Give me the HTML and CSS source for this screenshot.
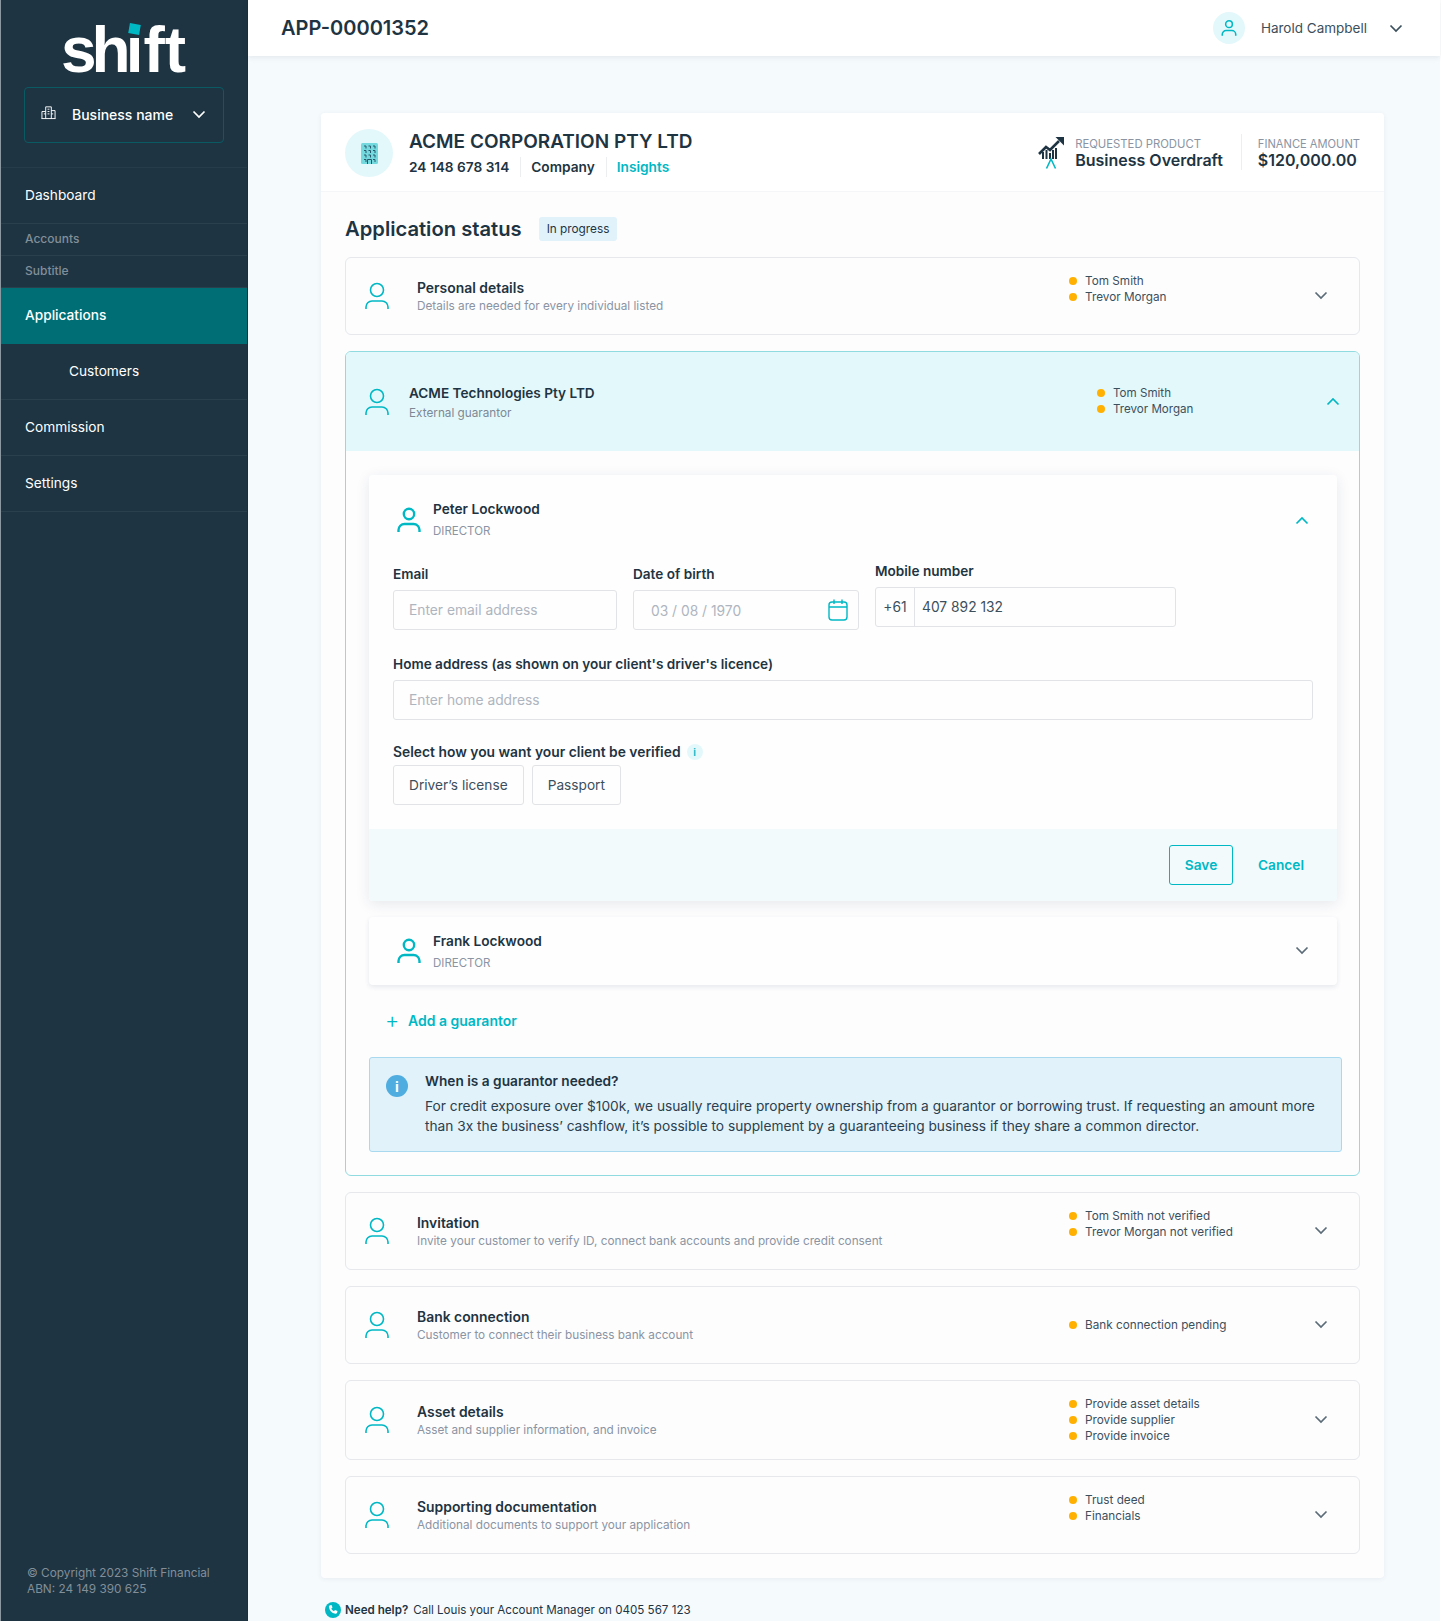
FILE: index.html
```html
<!DOCTYPE html>
<html lang="en">
<head>
<meta charset="utf-8">
<title>APP-00001352</title>
<link rel="stylesheet" href="styles.css">
</head>
<body>
<svg class="defs" width="0" height="0" aria-hidden="true">
  <symbol id="person" viewBox="0 0 24 28"><circle cx="12" cy="8" r="6.5" fill="none" stroke="currentColor" stroke-width="1.6"/><path d="M1 27v-2a6 6 0 0 1 6-6h10a6 6 0 0 1 6 6v2" fill="none" stroke="currentColor" stroke-width="1.6"/></symbol>
  <symbol id="person-b" viewBox="0 0 24 28"><circle cx="12" cy="8" r="5.2" fill="none" stroke="currentColor" stroke-width="2.4"/><path d="M1.5 26v-2a6 6 0 0 1 6-6h9a6 6 0 0 1 6 6v2" fill="none" stroke="currentColor" stroke-width="2.4"/></symbol>
  <symbol id="down" viewBox="0 0 14 9"><path d="M1.500 1.500 7 7l5.500-5.500" fill="none" stroke="currentColor" stroke-width="1.700"/></symbol>
  <symbol id="up" viewBox="0 0 14 9"><path d="M1.500 7.500 7 2l5.500 5.500" fill="none" stroke="currentColor" stroke-width="1.700"/></symbol>
</svg>
<div class="app">
  <aside class="sidebar">
    <div class="brand">
      <div class="logo"><span class="logo-tight">sh</span>ift<span class="logo-dot"></span></div>
      <div class="biz">
        <svg class="biz-icon" viewBox="0 0 16 16"><path d="M1 15V7.500h4M5 15V2.500h6V15M11 6.500h4V15M.5 15h15M7 5h2M7 7.500h2M7 10h2M3 10h2M11 10h2" fill="none" stroke="#fff" stroke-width="1"/></svg>
        <span class="biz-name">Business name</span>
        <svg class="biz-chev"><use href="#down"/></svg>
      </div>
    </div>
    <nav class="nav">
      <a class="nav-item">Dashboard</a>
      <span class="nav-sub">Accounts</span>
      <span class="nav-sub">Subtitle</span>
      <a class="nav-item active">Applications</a>
      <a class="nav-item indent">Customers</a>
      <a class="nav-item">Commission</a>
      <a class="nav-item">Settings</a>
    </nav>
    <footer class="side-foot">© Copyright 2023 Shift Financial<br>ABN: 24 149 390 625</footer>
  </aside>
  <div class="main">
    <header class="topbar">
      <div class="app-id">APP-00001352</div>
      <div class="user">
        <span class="user-avatar"><svg class="user-icon"><use href="#person-b"/></svg></span>
        <span class="user-name">Harold Campbell</span>
        <svg class="user-chev"><use href="#down"/></svg>
      </div>
    </header>
    <div class="content">
      <section class="card">
        <div class="card-head">
          <span class="co-avatar">
            <svg class="co-icon" viewBox="0 0 17 21"><rect width="17" height="21" rx="1.500" fill="#74d8df"/><path d="M3 3h2v2.500M7.500 3h2v2.500M12 3h2v2.500M3 7.500h2V10M7.500 7.500h2V10M12 7.500h2V10M3 12h2v2.500M7.500 12h2v2.500M12 12h2v2.500M3 16.500h2V19M12 16.500h2V19M6.500 21v-4.500h4V21" fill="none" stroke="#28586a" stroke-width="1"/></svg>
          </span>
          <div class="co-info">
            <div class="co-name">ACME CORPORATION PTY LTD</div>
            <div class="co-meta"><span>24 148 678 314</span><span>Company</span><span class="link">Insights</span></div>
          </div>
          <svg class="prod-icon" viewBox="0 0 26 32"><path d="M1 17 8 10l4 3 9-9" fill="none" stroke="#1e3442" stroke-width="2.600"/><path d="M17.500 0H26v8.500z" fill="#1e3442"/><path d="M5 15v7M8.500 13v9M12 16v6M15 13v9M18 11v11" stroke="#1e3442" stroke-width="2"/><path d="M8.500 31.500 13 22l4.500 9.500" fill="none" stroke="#00b8c4" stroke-width="1.600"/></svg>
          <div class="prod">
            <div class="prod-label">REQUESTED PRODUCT</div>
            <div class="prod-value">Business Overdraft</div>
          </div>
          <div class="prod amount">
            <div class="prod-label">FINANCE AMOUNT</div>
            <div class="prod-value">$120,000.00</div>
          </div>
        </div>
        <div class="card-body">
          <div class="status-head">
            <h2 class="status-title">Application status</h2>
            <span class="chip">In progress</span>
          </div>

          <div class="row">
            <svg class="person"><use href="#person"/></svg>
            <div class="row-text"><div class="row-title">Personal details</div><div class="row-sub">Details are needed for every individual listed</div></div>
            <ul class="todo two"><li>Tom Smith</li><li>Trevor Morgan</li></ul>
            <svg class="chev"><use href="#down"/></svg>
          </div>

          <div class="panel">
            <div class="panel-head">
              <svg class="person"><use href="#person"/></svg>
              <div class="panel-text"><div class="row-title">ACME Technologies Pty LTD</div><div class="panel-sub">External guarantor</div></div>
              <ul class="todo"><li>Tom Smith</li><li>Trevor Morgan</li></ul>
              <svg class="chev up"><use href="#up"/></svg>
            </div>
            <div class="panel-body">
              <div class="guar open">
                <div class="guar-head">
                  <svg class="person-b"><use href="#person-b"/></svg>
                  <div class="guar-text"><div class="guar-name">Peter Lockwood</div><div class="guar-role">DIRECTOR</div></div>
                  <svg class="chev up"><use href="#up"/></svg>
                </div>
                <div class="form">
                  <div class="form-row">
                    <div class="field f-email"><label class="label">Email</label><div class="input ph">Enter email address</div></div>
                    <div class="field f-dob"><label class="label">Date of birth</label><div class="input ph date">03 / 08 / 1970<svg class="cal" viewBox="0 0 20 22"><rect x="1" y="3" width="18" height="18" rx="3" fill="none" stroke="#00b8c4" stroke-width="1.400"/><path d="M1 8h18M6 .5V5M14 .5V5" fill="none" stroke="#00b8c4" stroke-width="1.400"/></svg></div></div>
                    <div class="field f-mob"><label class="label">Mobile number</label><div class="input phone"><span class="prefix">+61</span><span class="num">407 892 132</span></div></div>
                  </div>
                  <div class="field f-home"><label class="label">Home address (as shown on your client's driver's licence)</label><div class="input ph">Enter home address</div></div>
                  <div class="verify">
                    <div class="label verify-label">Select how you want your client be verified <span class="i-badge">i</span></div>
                    <div class="opts"><span class="opt">Driver’s license</span><span class="opt">Passport</span></div>
                  </div>
                </div>
                <div class="guar-foot"><span class="btn-save">Save</span><span class="btn-cancel">Cancel</span></div>
              </div>
              <div class="guar closed">
                <div class="guar-head">
                  <svg class="person-b"><use href="#person-b"/></svg>
                  <div class="guar-text"><div class="guar-name">Frank Lockwood</div><div class="guar-role">DIRECTOR</div></div>
                  <svg class="chev"><use href="#down"/></svg>
                </div>
              </div>
              <div class="add"><span class="plus">+</span>Add a guarantor</div>
              <div class="info">
                <span class="info-icon">i</span>
                <div class="info-text">
                  <div class="info-title">When is a guarantor needed?</div>
                  <p class="info-body">For credit exposure over $100k, we usually require property ownership from a guarantor or borrowing trust. If requesting an amount more than 3x the business’ cashflow, it’s possible to supplement by a guaranteeing business if they share a common director.</p>
                </div>
              </div>
            </div>
          </div>

          <div class="row">
            <svg class="person"><use href="#person"/></svg>
            <div class="row-text"><div class="row-title">Invitation</div><div class="row-sub">Invite your customer to verify ID, connect bank accounts and provide credit consent</div></div>
            <ul class="todo two"><li>Tom Smith not verified</li><li>Trevor Morgan not verified</li></ul>
            <svg class="chev"><use href="#down"/></svg>
          </div>
          <div class="row">
            <svg class="person"><use href="#person"/></svg>
            <div class="row-text"><div class="row-title">Bank connection</div><div class="row-sub">Customer to connect their business bank account</div></div>
            <ul class="todo"><li>Bank connection pending</li></ul>
            <svg class="chev"><use href="#down"/></svg>
          </div>
          <div class="row tall">
            <svg class="person"><use href="#person"/></svg>
            <div class="row-text"><div class="row-title">Asset details</div><div class="row-sub">Asset and supplier information, and invoice</div></div>
            <ul class="todo"><li>Provide asset details</li><li>Provide supplier</li><li>Provide invoice</li></ul>
            <svg class="chev"><use href="#down"/></svg>
          </div>
          <div class="row">
            <svg class="person"><use href="#person"/></svg>
            <div class="row-text"><div class="row-title">Supporting documentation</div><div class="row-sub">Additional documents to support your application</div></div>
            <ul class="todo two"><li>Trust deed</li><li>Financials</li></ul>
            <svg class="chev"><use href="#down"/></svg>
          </div>
        </div>
      </section>
      <div class="help">
        <svg class="help-icon" viewBox="0 0 16 16"><circle cx="8" cy="8" r="8" fill="#00b8c4"/><path d="M4.500 3.500 6.500 3l1 2.500-1.200 1c.5 1.300 1.300 2.100 2.700 2.700l1-1.200 2.500 1-.5 2c-.3.600-1 .9-1.600.8C6.800 11.200 4.800 9 3.900 5c-.1-.6.100-1.200.6-1.500z" fill="#fff"/></svg>
        <b class="help-strong">Need help?</b><span>Call Louis your Account Manager on 0405 567 123</span>
      </div>
    </div>
  </div>
</div>
</body>
</html>
```
FILE: styles.css
```css
* { box-sizing: border-box; }
html, body { margin: 0; padding: 0; }
body {
  background: #fff;
  font-family: Inter, "Noto Sans", sans-serif;
  color: #1e3442;
  font-size: 13px;
  height: 1621px;
  overflow: hidden;
}
.defs { position: absolute; }
.app {
  display: flex;
  width: 1440px;
  height: 1621px;
  border-left: 1px solid #8b98a1;
  background: #f5fafd;
}

/* sidebar */
.sidebar {
  width: 247px;
  flex: none;
  background: #1e3442;
  color: #fff;
  display: flex;
  flex-direction: column;
  border-right: 1px solid #18303c;
}
.brand { height: 167px; padding: 0 23px; display: flex; flex-direction: column; }
.logo {
  position: relative;
  align-self: center;
  font-family: "Liberation Sans", sans-serif;
  font-weight: 700;
  font-size: 64px;
  line-height: 66px;
  height: 66px;
  margin: 17px 1px 4px 0;
}
.logo-tight { letter-spacing: -5px; }
.logo-dot {
  position: absolute;
  left: 68px;
  top: 7px;
  width: 11px;
  height: 10px;
  background: #00b8c4;
  transform: rotate(10deg);
}
.biz {
  height: 56px;
  border: 1px solid #0a5a63;
  border-radius: 4px;
  display: flex;
  align-items: center;
  padding: 0 17px 2px 16px;
}
.biz-icon { width: 15px; height: 16px; margin-bottom: 4px; }
.biz-name { font-weight: 500; font-size: 14px; margin-left: 16px; flex: 1; }
.biz-chev { width: 14px; height: 9px; color: #fff; }
.nav { display: flex; flex-direction: column; border-top: 1px solid #263c4a; }
.nav-item {
  height: 56px;
  padding: 0 0 1px 24px;
  display: flex;
  align-items: center;
  font-size: 13.700px;
  border-bottom: 1px solid #2a404d;
}
.nav-item.active { background: #006e75; font-weight: 500; border-bottom: 0; padding-bottom: 2px; }
.nav-item.indent { padding-left: 68px; }
.nav-sub {
  height: 32px;
  padding: 0 0 2px 24px;
  display: flex;
  align-items: center;
  font-size: 12px;
  font-weight: 500;
  color: #828f99;
  border-bottom: 1px solid #2a404d;
}
.side-foot {
  margin-top: auto;
  padding: 0 0 24px 26px;
  font-size: 11.800px;
  line-height: 16px;
  color: #828f99;
}

/* main */
.main { flex: 1; min-width: 0; }
.topbar {
  height: 56px;
  background: #fff;
  box-shadow: 0 1px 6px rgba(30, 52, 66, 0.1);
  display: flex;
  align-items: center;
  justify-content: space-between;
  padding: 0 37px 0 33px;
}
.app-id { font-size: 20px; font-weight: 600; }
.user { display: flex; align-items: center; }
.user-avatar {
  width: 32px; height: 32px; border-radius: 50%;
  background: #e3f8fb; color: #00b8c4;
  display: flex; align-items: center; justify-content: center;
}
.user-icon { width: 16px; height: 18px; }
.user-name { margin-left: 16px; font-size: 13.500px; color: #3c4f5c; }
.user-chev { width: 14px; height: 9px; margin-left: 22px; color: #3c4f5c; }
.content { padding: 57px 56px 0 73px; }
.card {
  background: #fdfdfe;
  border-radius: 4px;
  box-shadow: 0 1px 5px rgba(30, 52, 66, 0.07);
  height: 1465px;
}
.card-head {
  height: 79px;
  background: #fff;
  border-bottom: 1px solid #f5f6f8;
  border-radius: 4px 4px 0 0;
  display: flex;
  align-items: center;
  padding: 0 24px;
}
.co-avatar {
  width: 48px; height: 48px; border-radius: 50%;
  background: #e3f8fb;
  display: flex; align-items: center; justify-content: center;
  flex: none;
  margin-top: 2px;
}
.co-icon { width: 17px; height: 21px; }
.co-info { margin-left: 16px; flex: 1; padding-top: 2px; }
.co-name { font-size: 19px; font-weight: 600; line-height: 24px; }
.co-meta { display: flex; margin-top: 3px; font-size: 13.700px; font-weight: 600; line-height: 20px; }
.co-meta span + span { border-left: 1px solid #eceef0; margin-left: 11px; padding-left: 10px; }
.link { color: #00b8c4; }
.prod-icon { width: 26px; height: 32px; margin-right: 11px; margin-top: 2px; }
.prod { padding-top: 3px; }
.prod-label { font-size: 11.300px; color: #8a94a3; line-height: 14px; }
.prod-value { font-size: 16px; font-weight: 600; line-height: 20px; margin-top: -1px; }
.amount { border-left: 1px solid #eceef0; margin-left: 18px; padding-left: 16px; }
.amount .prod-label { font-size: 11.150px; }

.card-body { padding: 0 24px; }
.status-head { height: 65px; display: flex; align-items: center; padding-top: 9px; }
.status-title { margin: 0; font-size: 20.200px; font-weight: 600; line-height: 24px; }
.chip {
  margin-left: 17px;
  height: 24px;
  line-height: 24px;
  padding: 0 8px;
  background: #e1f2fb;
  border-radius: 3px;
  font-size: 11.800px;
}
.row {
  height: 78px;
  margin-bottom: 16px;
  border: 1px solid #e6e8eb;
  border-radius: 6px;
  display: flex;
  align-items: center;
  padding: 0 20px 0 19px;
  background: #fdfdfe;
}
.row.tall { height: 80px; }
.person { width: 24px; height: 28px; color: #00b8c4; flex: none; }
.row-text { margin-left: 28px; flex: 1; }
.row-title { font-size: 13.900px; font-weight: 600; line-height: 20px; }
.panel-text .row-title { font-size: 13.600px; }
.row-sub { font-size: 11.750px; color: #8a94a3; line-height: 16px; }
.todo { list-style: none; margin: 0; padding: 0; width: 245px; font-size: 11.750px; line-height: 16px; color: #3c4f5c; }
.todo.two { margin-bottom: 14px; }
.todo li { position: relative; padding-left: 16px; }
.todo li::before {
  content: "";
  position: absolute;
  left: 0; top: 4px;
  width: 8px; height: 8px;
  border-radius: 50%;
  background: #ffb000;
}
.chev { width: 14px; height: 9px; color: #5b6b77; flex: none; margin: 0 11px 2px 0; }
.chev.up { color: #00b8c4; margin-bottom: 0; }

.panel {
  height: 825px;
  margin-bottom: 16px;
  border: 1px solid #8fdbdf;
  border-radius: 6px;
  overflow: hidden;
}
.panel-head {
  height: 99px;
  background: #e3f8fb;
  display: flex;
  align-items: center;
  padding: 0 8px 0 19px;
}
.panel-text { margin-left: 20px; flex: 1; }
.panel-sub { font-size: 11.750px; color: #7c8894; line-height: 16px; margin-top: 2px; }
.panel-head .todo { width: 229px; margin-bottom: 2px; font-size: 11.600px; }
.panel-body { padding: 24px 18px 0 23px; }
.guar { background: #fefefe; border-radius: 4px; width: 968px; box-shadow: 0 3px 14px rgba(30, 52, 66, 0.1); }
.guar.closed { height: 68px; margin-top: 16px; box-shadow: 0 2px 5px rgba(30, 52, 66, 0.1); }
.guar.open { height: 426px; display: flex; flex-direction: column; overflow: hidden; }
.guar-head { display: flex; align-items: center; height: 68px; padding: 0 28px 0 28px; }
.guar.open .guar-head { height: 90px; }
.guar.open .guar-text { margin-top: -2px; }
.person-b { width: 24px; height: 28px; color: #00b8c4; flex: none; }
.guar-text { margin-left: 12px; flex: 1; }
.guar-name { font-size: 13.700px; font-weight: 600; line-height: 18px; }
.guar-role { font-size: 11.500px; color: #8a94a3; line-height: 16px; margin-top: 5px; }
.guar-head .chev { margin-right: 0; }
.form { padding: 0 24px; flex: 1; }
.form-row { display: flex; gap: 16px; margin-top: -1px; }
.field { display: flex; flex-direction: column; }
.label { font-size: 13.600px; font-weight: 600; line-height: 20px; margin-bottom: 6px; }
.f-email { width: 224px; }
.f-dob { width: 226px; }
.f-mob { width: 301px; margin-top: -3px; }
.f-home { margin-top: 24px; }
.input {
  height: 40px;
  border: 1px solid #e1e3e6;
  border-radius: 3px;
  display: flex;
  align-items: center;
  padding: 0 15px;
  font-size: 13.800px;
}
.ph { color: #aeb5bf; }
.date { justify-content: space-between; padding: 1px 10px 0 17px; }
.cal { width: 20px; height: 22px; margin-top: -2px; }
.phone { padding: 0; color: #3c4f5c; }
.prefix { width: 39px; height: 100%; border-right: 1px solid #e1e3e6; display: flex; align-items: center; justify-content: center; }
.num { margin-left: 7px; }
.verify { margin-top: 22px; }
.verify-label { font-size: 13.850px; margin-bottom: 3px; display: flex; align-items: center; gap: 6px; }
.i-badge {
  width: 16px; height: 16px; border-radius: 50%;
  background: #e3f8fb; color: #00b8c4;
  font-size: 10px; display: flex; align-items: center; justify-content: center;
}
.opts { display: flex; gap: 8px; }
.opt {
  height: 40px; display: flex; align-items: center;
  padding: 0 15px;
  border: 1px solid #e1e3e6; border-radius: 3px;
  font-size: 13.700px; color: #3c4f5c;
}
.guar-foot {
  height: 72px;
  background: #f3fafc;
  flex: none;
  display: flex;
  align-items: center;
  justify-content: flex-end;
  padding-right: 33px;
}
.btn-save {
  width: 64px; height: 40px;
  border: 1px solid #00b8c4; border-radius: 3px;
  color: #00b8c4; font-weight: 600; font-size: 13.700px;
  display: flex; align-items: center; justify-content: center;
}
.btn-cancel { margin-left: 25px; color: #00b8c4; font-weight: 600; font-size: 13.700px; }
.add {
  margin-top: 25px;
  height: 20px;
  display: flex;
  align-items: center;
  color: #00b8c4;
  font-size: 14px;
  font-weight: 600;
  padding-left: 16px;
}
.plus { font-size: 22px; font-weight: 300; width: 23px; }
.info {
  margin-top: 27px;
  width: 973px;
  height: 95px;
  background: #e1f2fb;
  border: 1px solid #a9d9ef;
  border-radius: 3px;
  display: flex;
  padding: 13px 24px 0 16px;
}
.info-icon {
  width: 22px; height: 22px; border-radius: 50%;
  background: #4fade0; color: #fff;
  font-weight: 700; font-size: 14px;
  display: flex; align-items: center; justify-content: center;
  flex: none;
  margin-top: 4px;
}
.info-text { margin-left: 17px; }
.info-title { font-size: 13.700px; font-weight: 600; line-height: 20px; }
.info-body { margin: 5px 0 0; font-size: 13.720px; line-height: 20px; color: #2b404e; }

.help { display: flex; align-items: center; margin-top: 24px; padding-left: 4px; font-size: 11.600px; }
.help-icon { width: 16px; height: 16px; margin-right: 4px; }
.help-strong { font-weight: 600; margin-right: 5px; }
```
